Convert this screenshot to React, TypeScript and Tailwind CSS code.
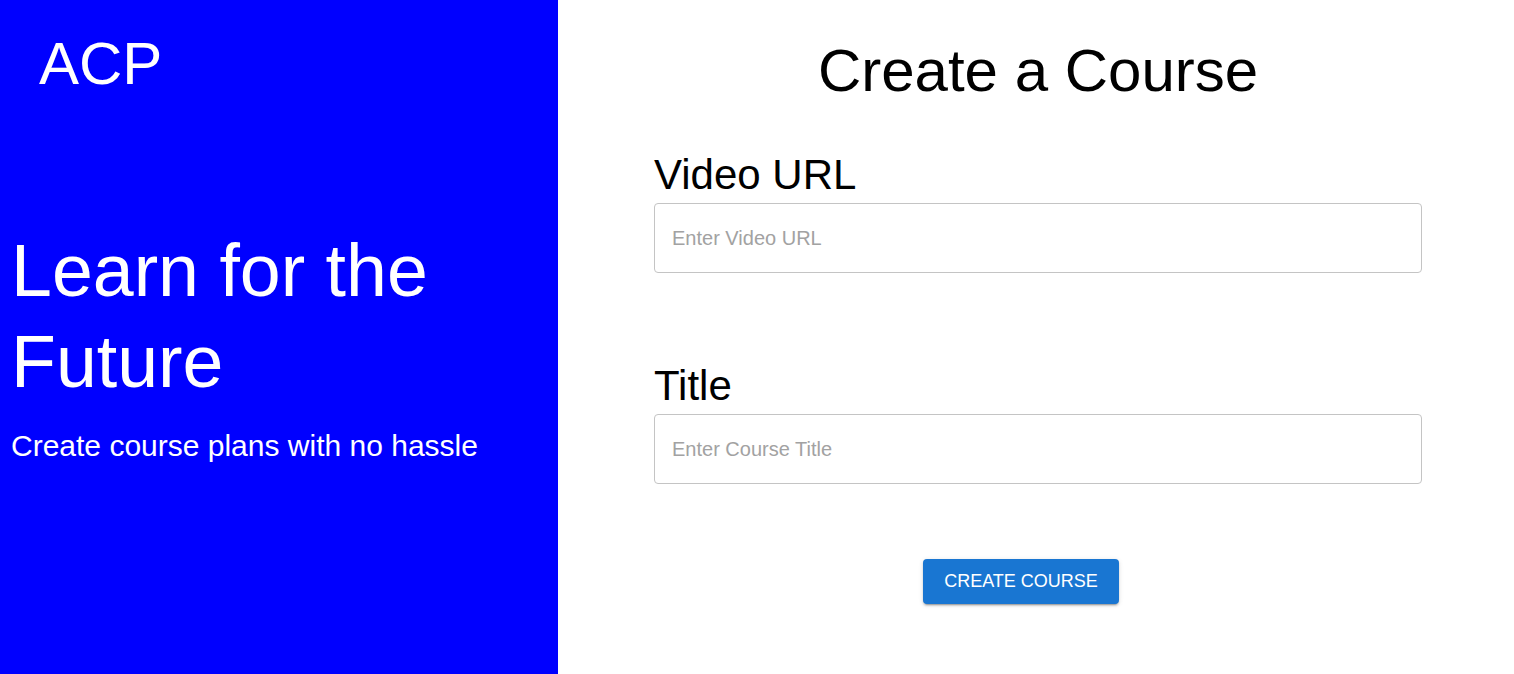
import React, { useState } from 'react';

const Field = ({ label, placeholder, value, onChange }: { label: string; placeholder: string; value: string; onChange: (v: string) => void; }) => (
  <div className="flex flex-col">
    <label className="text-[42px] leading-[48px] text-black">{label}</label>
    <input
      value={value}
      onChange={(e) => onChange(e.target.value)}
      placeholder={placeholder}
      className="mt-[4px] h-[70px] w-full rounded-[4px] border border-[#c4c4c4] bg-white px-[17px] text-[20px] text-black outline-none placeholder:text-[#a2a2a2] focus:border-[#1976d2]"
    />
  </div>
);

export default function App() {
  const [url, setUrl] = useState('');
  const [title, setTitle] = useState('');

  return (
    <div className="flex h-[674px] w-full bg-white font-['Liberation_Sans',Arial,sans-serif]">
      {/* left hero */}
      <aside className="flex w-[558px] shrink-0 flex-col bg-[#0000ff] text-white">
        <div className="pl-[39px] pt-[29px] text-[60px] leading-[69px]">ACP</div>
        <div className="mt-[127px] pl-[11px]">
          <h2 className="text-[73.5px] leading-[91px]">Learn for the Future</h2>
          <p className="mt-[22px] text-[30px] leading-[34px]">Create course plans with no hassle</p>
        </div>
      </aside>

      {/* form */}
      <main className="flex flex-1 flex-col pt-[36px]">
        <h1 className="pl-[4px] text-center text-[60px] leading-[69px] text-black">Create a Course</h1>
        <form
          className="ml-[96px] mt-[46px] flex w-[768px] flex-col"
          onSubmit={(e) => e.preventDefault()}
        >
          <Field label="Video URL" placeholder="Enter Video URL" value={url} onChange={setUrl} />
          <div className="mt-[89px]">
            <Field label="Title" placeholder="Enter Course Title" value={title} onChange={setTitle} />
          </div>
          <button
            type="submit"
            className="ml-[269px] mt-[75px] h-[45px] w-[196px] rounded-[4px] bg-[#1976d2] text-[18px] uppercase text-white shadow-[0_3px_1px_-2px_rgba(0,0,0,0.2),0_2px_2px_0_rgba(0,0,0,0.14),0_1px_5px_0_rgba(0,0,0,0.12)] hover:bg-[#1565c0]"
          >
            Create Course
          </button>
        </form>
      </main>
    </div>
  );
}
